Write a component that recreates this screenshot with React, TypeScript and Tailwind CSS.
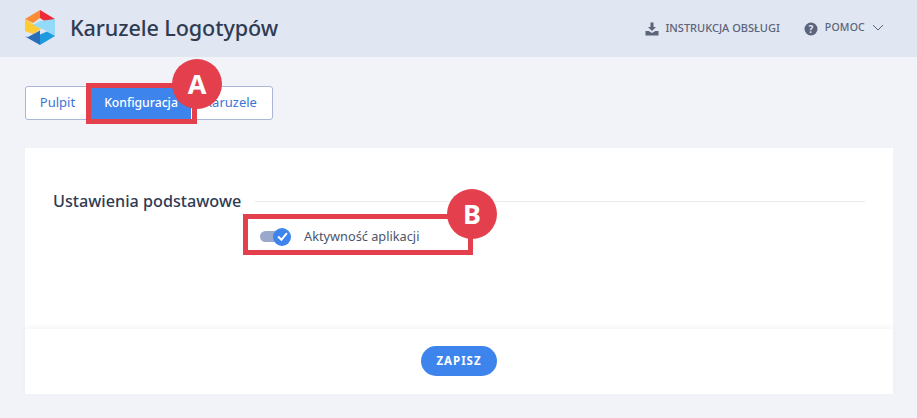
export default function App() {
  return (
    <div className="relative h-[418px] w-[917px] overflow-hidden bg-[#f1f3f9] font-['Noto_Sans','Open_Sans',sans-serif] text-[#2f3b52]">
      <header className="flex h-[57px] items-center justify-between bg-[#e0e6f2] pl-[24px] pr-[33px]">
        <div className="flex items-center gap-[14px]">
          <svg width="32" height="36" viewBox="0 0 32 36" className="-mt-[1px]">
            <polygon points="16,0 16,8 9,13 1,9" fill="#fb8c35" />
            <polygon points="16,0 31,9 24,13.5 16,8" fill="#ee2a38" />
            <polygon points="1,9 17,19 9,24 1,21" fill="#fdcb33" />
            <polygon points="31,9 31,26 23,21 9,15 16,11" fill="#93d9f8" />
            <polygon points="4,27 16,20.5 16,35 1,26.5" fill="#2b6cb8" />
            <polygon points="31,26 23,21.5 16,24.5 16,35" fill="#1e9be0" />
          </svg>
          <span className="text-[21.6px] font-medium tracking-[-0.1px] text-[#2f3b52]">Karuzele Logotypów</span>
        </div>
        <div className="flex items-center text-[#5b6478]">
          <svg width="14" height="14" viewBox="0 0 14 14" className="mr-[6px]" fill="#5b6478">
            <path d="M5.5 0.5h3V5H11L7 9 3 5h2.5z" />
            <path d="M0.5 9h3.2L7 11l3.3-2h3.2v4.5H0.5z" />
          </svg>
          <span className="text-[11px] font-medium">INSTRUKCJA OBSŁUGI</span>
          <svg width="14" height="14" viewBox="0 0 14 14" className="ml-[24px] mr-[7px]">
            <circle cx="7" cy="7" r="6.5" fill="#5b6478" />
            <text x="7" y="10.5" textAnchor="middle" fontSize="10" fontWeight="700" fill="#e0e6f2" fontFamily="Noto Sans">?</text>
          </svg>
          <span className="-mt-[2px] text-[10.5px] font-medium tracking-[0.2px]">POMOC</span>
          <svg width="12" height="7" viewBox="0 0 12 7" className="-mt-[2px] ml-[7px]" fill="none" stroke="#5b6478" strokeWidth="1">
            <path d="M1 1l5 5 5-5" />
          </svg>
        </div>
      </header>

      <main className="px-[25px] pt-[29px]">
        <nav className="flex h-[34px] w-[248px] overflow-hidden rounded-[3px] border border-[#a9b6d6] bg-white text-[13px] text-[#3b74d8]">
          <span className="flex w-[63px] items-center justify-center">Pulpit</span>
          <span className="flex w-[102px] items-center justify-center bg-[#3d84ec] pl-[2px] text-[12.2px] font-medium text-white">Konfiguracja</span>
          <span className="flex flex-1 items-center justify-center pr-[2px]">Karuzele</span>
        </nav>

        <section className="mt-[28px] h-[181px] w-[868px] bg-white pl-[28px] pr-[28px] pt-[42px]">
          <div className="flex items-center">
            <h2 className="text-[16.2px] font-medium leading-[22px] text-[#2f3b52]">Ustawienia podstawowe</h2>
            <div className="ml-[14px] h-px flex-1 bg-[#e9ebf0]" />
          </div>
          <div className="ml-[207px] mt-[15px] flex h-[20px] items-center">
            <div className="relative -mt-[2px] h-[11px] w-[24px] rounded-full bg-[#9aa9cb]">
              <div className="absolute -right-[7px] -top-[3px] flex h-[18px] w-[18px] items-center justify-center rounded-full bg-[#3d84ec]">
                <svg width="11" height="9" viewBox="0 0 10 8" fill="none" stroke="white" strokeWidth="1.8">
                  <path d="M1 4l3 3 5-6" />
                </svg>
              </div>
            </div>
            <span className="ml-[20px] text-[12.75px] text-[#4c5568]">Aktywność aplikacji</span>
          </div>
        </section>

        <div className="flex h-[65px] w-[868px] items-center justify-center bg-white pb-px shadow-[0_-3px_5px_rgba(0,0,0,0.035)]">
          <button className="h-[30px] w-[76px] rounded-full bg-[#3d84ec] text-[11.5px] font-bold tracking-[1px] text-white">ZAPISZ</button>
        </div>
      </main>

      <div className="absolute left-[86px] top-[83px] h-[41px] w-[111px] border-[5px] border-[#e33f4c]" />
      <div className="absolute left-[172px] top-[59px] flex h-[50px] w-[50px] items-center justify-center rounded-full bg-[#e33f4c] text-[27px] font-bold text-white">A</div>
      <div className="absolute left-[243px] top-[214px] h-[41px] w-[230px] border-[5px] border-[#e33f4c]" />
      <div className="absolute left-[447px] top-[189px] flex h-[50px] w-[50px] items-center justify-center rounded-full bg-[#e33f4c] text-[27px] font-bold text-white">B</div>
    </div>
  );
}
